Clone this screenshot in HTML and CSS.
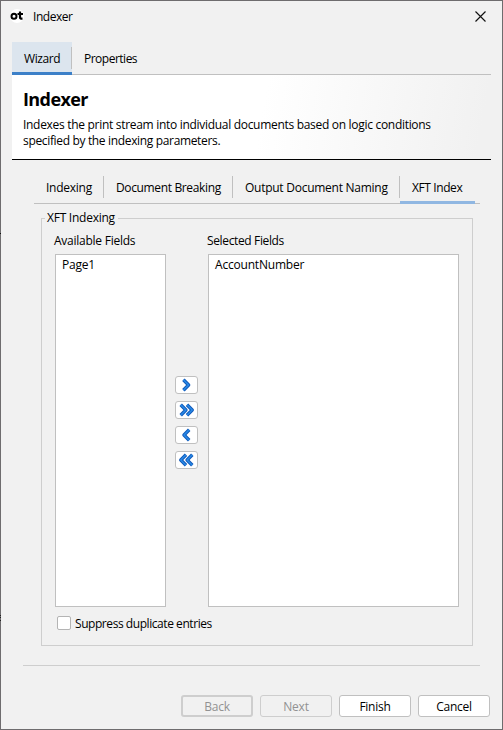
FILE: index.html
```html
<!DOCTYPE html>
<html lang="en">
<head>
<meta charset="utf-8">
<title>Indexer</title>
<link rel="stylesheet" href="styles.css">
</head>
<body>
<div class="window">
  <header class="titlebar">
    <svg class="logo" width="14" height="14" viewBox="0 0 14 14"><circle cx="7" cy="7" r="7" fill="#fff"/><ellipse cx="4" cy="7.200" rx="2.500" ry="2.500" fill="none" stroke="#000" stroke-width="2"/><path d="M10 2.500v6q0 1.300 2.500 1.200M7.500 5H13" fill="none" stroke="#000" stroke-width="2.200"/></svg>
    <span class="window-title">Indexer</span>
    <svg class="close" width="11" height="11" viewBox="0 0 11 11"><path d="M.5.5l10 10M10.500.5l-10 10" stroke="#111" stroke-width="1.15"/></svg>
  </header>
  <nav class="main-tabs">
    <div class="main-tab selected"><span class="t-wizard">Wizard</span></div>
    <div class="main-tab"><span class="t-properties">Properties</span></div>
  </nav>
  <section class="banner">
    <h1>Indexer</h1>
    <p><span class="line-one">Indexes the print stream into individual documents based on logic conditions</span><br><span class="line-two">specified by the indexing parameters.</span></p>
  </section>
  <nav class="sub-tabs">
    <div class="sub-tab indexing">Indexing</div>
    <div class="sub-tab breaking">Document Breaking</div>
    <div class="sub-tab naming">Output Document Naming</div>
    <div class="sub-tab xft">XFT Index</div>
  </nav>
  <fieldset class="group">
    <legend>XFT Indexing</legend>
    <div class="picker">
      <div class="column">
        <label>Available Fields</label>
        <div class="list"><span>Page1</span></div>
      </div>
      <div class="movers">
        <button><svg width="20" height="16" viewBox="0 0 20 16"><path class="edge" d="M6.400 2.800L11.600 8l-5.200 5.200"/><path class="shine" d="M6.400 2.800L11.600 8l-5.200 5.200"/></svg></button>
        <button><svg width="20" height="16" viewBox="0 0 20 16"><path class="edge" d="M3.700 2.800L8.900 8l-5.200 5.200M10 2.800L15.200 8 10 13.200"/><path class="shine" d="M3.700 2.800L8.900 8l-5.200 5.200M10 2.800L15.200 8 10 13.200"/></svg></button>
        <button><svg width="20" height="16" viewBox="0 0 20 16"><path class="edge" d="M12.200 2.800L7 8l5.200 5.200"/><path class="shine" d="M12.200 2.800L7 8l5.200 5.200"/></svg></button>
        <button><svg width="20" height="16" viewBox="0 0 20 16"><path class="edge" d="M9 2.800L3.800 8 9 13.200M15.300 2.800L10.100 8l5.200 5.200"/><path class="shine" d="M9 2.800L3.800 8 9 13.200M15.300 2.800L10.100 8l5.200 5.200"/></svg></button>
      </div>
      <div class="column">
        <label class="t-selected">Selected Fields</label>
        <div class="list"><span class="t-account">AccountNumber</span></div>
      </div>
    </div>
    <div class="option"><i class="checkbox"></i><span>Suppress duplicate entries</span></div>
  </fieldset>
  <hr>
  <footer class="actions">
    <button class="disabled heavy" disabled>Back</button>
    <button class="disabled" disabled>Next</button>
    <button>Finish</button>
    <button>Cancel</button>
  </footer>
</div>
</body>
</html>
```
FILE: styles.css
```css
* { box-sizing: border-box; }
body { margin: 0; }
.window {
  position: relative;
  width: 503px;
  height: 730px;
  border: 1px solid #6e6c6e;
  background: #f1f1f1;
  font: 12px/16px "Open Sans", "Noto Sans", sans-serif;
  color: #000;
  letter-spacing: -0.25px;
  white-space: nowrap;
}
.window::before {
  content: "";
  position: absolute;
  left: -1px;
  top: 232px;
  width: 1px;
  height: 388px;
  background:
    linear-gradient(#111, #111) 0 0 / 1px 1px no-repeat,
    linear-gradient(#222, #222) 0 382px / 1px 1px no-repeat,
    linear-gradient(#222, #222) 0 384px / 1px 1px no-repeat,
    linear-gradient(#222, #222) 0 387px / 1px 1px no-repeat;
}
.titlebar { display: flex; align-items: center; height: 30px; padding: 0 16px 0 9px; }
.window-title { margin-left: 9px; padding-top: 1px; letter-spacing: -0.45px; }
.close { margin-left: auto; }
.main-tabs { display: flex; height: 33px; margin: 11px 11px 0; background: linear-gradient(#c0c0c0, #c0c0c0) bottom / 100% 1px no-repeat; }
.main-tab { padding: 9px 12px 0; }
.main-tab.selected {
  width: 60px;
  border-bottom: 3px solid #3c80c8;
  background: linear-gradient(#c0c0c0, #c0c0c0) right 5px / 1px 22px no-repeat, #dce5ee;
}
.t-wizard { letter-spacing: -0.4px; }
.t-properties { letter-spacing: -0.5px; }
.banner {
  height: 85px;
  margin: 0 11px;
  padding: 11px 11px 0;
  border-bottom: 1px solid #000;
  background: linear-gradient(100deg, #fff 52%, #f1f1f1 97%);
}
h1 { margin: 0; font-size: 18px; line-height: 26px; font-weight: 700; letter-spacing: -0.6px; }
p { margin: 5px 0 0; }
.line-one { letter-spacing: -0.3px; }
.line-two { letter-spacing: -0.34px; }
.sub-tabs { display: flex; width: 446px; height: 34px; margin: 10px 0 0 33px; background: linear-gradient(#c0c0c0, #c0c0c0) bottom 0 left 0 / 100% 1px no-repeat; }
.sub-tab { height: 34px; padding: 10px 0 0 12px; background: linear-gradient(#c0c0c0, #c0c0c0) right 6px / 1px 22px no-repeat; }
.indexing { width: 70px; }
.breaking { width: 129px; letter-spacing: -0.36px; }
.naming { width: 167px; letter-spacing: -0.26px; }
.xft { width: 75px; border-bottom: 3px solid #90b7e2; background: none; letter-spacing: -0.4px; }
.group { width: 432px; height: 438px; margin: 4px 0 0 40px; padding: 5px 12px 0 13px; border: 1px solid #cecece; }
legend { height: 20px; margin-left: -10px; padding: 2px 3px 0 2px; }
.picker { display: flex; }
.column { display: flex; flex-direction: column; width: 111px; }
.column:last-child { width: 251px; }
.column label { height: 21px; margin-left: -1px; }
.t-selected { letter-spacing: -0.36px; }
.list { height: 353px; padding: 2px 6px; border: 1px solid #c0c0c0; background: #fff; }
.t-account { letter-spacing: -0.2px; }
.movers { display: flex; flex-direction: column; gap: 7px; width: 42px; padding: 143px 0 0 9px; }
.movers button { width: 23px; height: 18px; padding: 0; border: 1px solid #c0c0c0; border-radius: 3px; background: #fff; display: grid; place-items: center; }
.movers svg { fill: none; stroke-linejoin: round; }
.edge { stroke: #1259b9; stroke-width: 3.5; }
.shine { stroke: #288be8; stroke-width: 1.5; }
.option { display: flex; align-items: center; height: 16px; margin: 8px 0 0 2px; letter-spacing: -0.44px; }
.option span { padding-top: 1px; }
.checkbox { width: 14px; height: 14px; margin-right: 4px; border: 1px solid #b4b4b4; border-radius: 2px; background: #fff; }
hr { width: 457px; height: 1px; margin: 19px 0 0 22px; border: 0; background: #cecece; }
.actions { display: flex; gap: 7px; margin: 29px 0 0 180px; }
.actions button { width: 72px; height: 22px; padding: 2px 0 0; border: 1px solid #c0c0c0; border-radius: 3px; background: #fff; font: inherit; letter-spacing: inherit; color: #000; }
.actions .disabled { border-color: #cecece; background: #f1f1f1; color: #929292; }
.actions .heavy { border-width: 2px; }
```
